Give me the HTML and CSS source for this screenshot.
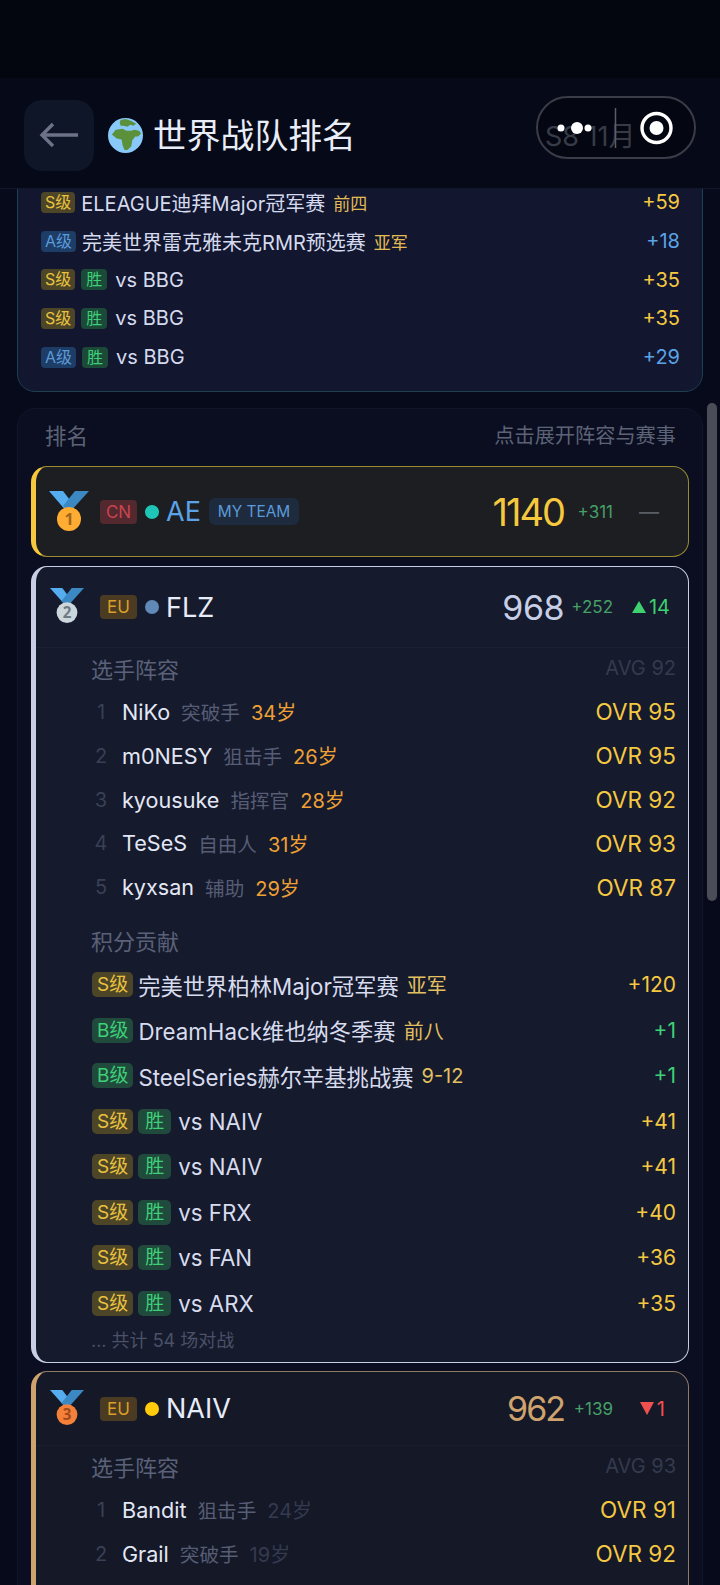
FILE: index.html
```html
<!DOCTYPE html>
<html lang="zh-CN">
<head>
    <meta charset="UTF-8">
    <meta name="viewport" content="width=device-width, initial-scale=1.0">
    <title>世界战队排名</title>
    <link rel="stylesheet" href="styles.css">
</head>
<body>

    <div class="status-band"></div>

    <header class="topbar">
        <button class="back-btn" aria-label="返回">
            <svg viewBox="0 0 40 26" width="40" height="26"><path d="M39 13H3M14 2 3 13l11 11" fill="none" stroke="#6d7289" stroke-width="3.4"/></svg>
        </button>
        <svg class="globe" viewBox="0 0 36 36" width="35" height="35">
            <circle cx="18" cy="18" r="18" fill="#88c9f9"/>
            <path d="M13 2l5-1 6 2 5 3-3 2-3-1-3 2-4-1-3 0-1-3Z" fill="#5c913b"/>
            <path d="M4 17l4-5 7-1 4 2 5 0 3-1 5 1 2 3-3 3-3 0-3 4-1 6-4 4-3 0-2-5-1-6-5-1-5-4Z" fill="#5c913b"/>
        </svg>
        <h1 class="page-title">世界战队排名</h1>
        <span class="season">S8 11月</span>
        <div class="capsule">
            <svg viewBox="0 0 160 62" width="160" height="62">
                <circle cx="25" cy="31" r="3.5" fill="#fff"/>
                <circle cx="41" cy="31" r="6" fill="#fff"/>
                <circle cx="52" cy="31" r="3.5" fill="#fff"/>
                <path d="M79.5 11v40" stroke="#5a5e6b" stroke-width="1.5"/>
                <circle cx="120.5" cy="31" r="14.5" fill="none" stroke="#fff" stroke-width="3.4"/>
                <circle cx="120.5" cy="31" r="7" fill="#fff"/>
            </svg>
        </div>
    </header>

    <section class="summary">
        <div class="match-row">
            <span class="tag tag-s">S级</span><span class="match-name">ELEAGUE迪拜Major冠军赛</span><span class="match-place">前四</span>
            <span class="match-pts pts-s">+59</span>
        </div>
        <div class="match-row">
            <span class="tag tag-a">A级</span><span class="match-name">完美世界雷克雅未克RMR预选赛</span><span class="match-place">亚军</span>
            <span class="match-pts pts-a">+18</span>
        </div>
        <div class="match-row">
            <span class="tag tag-s">S级</span><span class="tag tag-win">胜</span><span class="match-name">vs BBG</span>
            <span class="match-pts pts-s">+35</span>
        </div>
        <div class="match-row">
            <span class="tag tag-s">S级</span><span class="tag tag-win">胜</span><span class="match-name">vs BBG</span>
            <span class="match-pts pts-s">+35</span>
        </div>
        <div class="match-row">
            <span class="tag tag-a">A级</span><span class="tag tag-win">胜</span><span class="match-name">vs BBG</span>
            <span class="match-pts pts-a">+29</span>
        </div>
    </section>

    <section class="panel">
        <div class="panel-head">
            <span class="panel-title">排名</span>
            <span class="panel-hint">点击展开阵容与赛事</span>
        </div>

        <!-- 第一名 -->
        <article class="team team-gold">
            <div class="team-head">
                <svg class="medal medal-lg" viewBox="0 0 40 42">
                    <path d="M0 0h14l10 13-6 8Z" fill="#55acee"/>
                    <path d="M40 0H26L14 15l7 6Z" fill="#3b88c3"/>
                    <circle cx="20" cy="28" r="12" fill="#ffac33"/>
                    <text x="20" y="34" class="medal-num" fill="#a0661a">1</text>
                </svg>
                <span class="region region-cn">CN</span>
                <span class="dot dot-teal"></span>
                <span class="team-name name-blue">AE</span>
                <span class="my-team">MY TEAM</span>
                <span class="score score-gold">1140</span>
                <span class="gain">+311</span>
                <span class="trend trend-flat">—</span>
            </div>
        </article>

        <!-- 第二名 -->
        <article class="team team-silver">
            <div class="team-head">
                <svg class="medal" viewBox="0 0 36 37">
                    <path d="M0 0h13l9 12-5 7Z" fill="#55acee"/>
                    <path d="M36 0H23L12 14l7 5Z" fill="#3b88c3"/>
                    <circle cx="18" cy="26" r="11" fill="#ccd6dd"/>
                    <text x="18" y="32" class="medal-num" fill="#6d7b82">2</text>
                </svg>
                <span class="region region-eu">EU</span>
                <span class="dot dot-slate"></span>
                <span class="team-name">FLZ</span>
                <span class="score score-silver">968</span>
                <span class="gain">+252</span>
                <span class="trend trend-up"><i class="tri-up"></i>14</span>
            </div>
            <div class="team-body">
                <div class="section-head"><span>选手阵容</span><span class="avg">AVG 92</span></div>
                <div class="player"><span class="idx">1</span><span class="nick">NiKo</span><span class="role">突破手</span><span class="age age-hot">34岁</span><span class="ovr">OVR 95</span></div>
                <div class="player"><span class="idx">2</span><span class="nick">m0NESY</span><span class="role">狙击手</span><span class="age age-hot">26岁</span><span class="ovr">OVR 95</span></div>
                <div class="player"><span class="idx">3</span><span class="nick">kyousuke</span><span class="role">指挥官</span><span class="age age-hot">28岁</span><span class="ovr">OVR 92</span></div>
                <div class="player"><span class="idx">4</span><span class="nick">TeSeS</span><span class="role">自由人</span><span class="age age-hot">31岁</span><span class="ovr">OVR 93</span></div>
                <div class="player"><span class="idx">5</span><span class="nick">kyxsan</span><span class="role">辅助</span><span class="age age-hot">29岁</span><span class="ovr">OVR 87</span></div>

                <div class="section-head section-gap"><span>积分贡献</span></div>
                <div class="event"><span class="etag etag-s">S级</span><span class="ev-name">完美世界柏林Major冠军赛</span><span class="ev-place">亚军</span><span class="ev-pts pts-s">+120</span></div>
                <div class="event"><span class="etag etag-b">B级</span><span class="ev-name">DreamHack维也纳冬季赛</span><span class="ev-place">前八</span><span class="ev-pts pts-b">+1</span></div>
                <div class="event"><span class="etag etag-b">B级</span><span class="ev-name">SteelSeries赫尔辛基挑战赛</span><span class="ev-place">9-12</span><span class="ev-pts pts-b">+1</span></div>
                <div class="event"><span class="etag etag-s">S级</span><span class="etag etag-win">胜</span><span class="ev-name">vs NAIV</span><span class="ev-pts pts-s">+41</span></div>
                <div class="event"><span class="etag etag-s">S级</span><span class="etag etag-win">胜</span><span class="ev-name">vs NAIV</span><span class="ev-pts pts-s">+41</span></div>
                <div class="event"><span class="etag etag-s">S级</span><span class="etag etag-win">胜</span><span class="ev-name">vs FRX</span><span class="ev-pts pts-s">+40</span></div>
                <div class="event"><span class="etag etag-s">S级</span><span class="etag etag-win">胜</span><span class="ev-name">vs FAN</span><span class="ev-pts pts-s">+36</span></div>
                <div class="event"><span class="etag etag-s">S级</span><span class="etag etag-win">胜</span><span class="ev-name">vs ARX</span><span class="ev-pts pts-s">+35</span></div>
                <div class="more">... 共计 54 场对战</div>
            </div>
        </article>

        <!-- 第三名 -->
        <article class="team team-bronze">
            <div class="team-head">
                <svg class="medal" viewBox="0 0 36 37">
                    <path d="M0 0h13l9 12-5 7Z" fill="#55acee"/>
                    <path d="M36 0H23L12 14l7 5Z" fill="#3b88c3"/>
                    <circle cx="18" cy="26" r="11" fill="#f4803a"/>
                    <text x="18" y="32" class="medal-num" fill="#a04a1a">3</text>
                </svg>
                <span class="region region-eu">EU</span>
                <span class="dot dot-yellow"></span>
                <span class="team-name">NAIV</span>
                <span class="score score-bronze">962</span>
                <span class="gain">+139</span>
                <span class="trend trend-down"><i class="tri-down"></i>1</span>
            </div>
            <div class="team-body">
                <div class="section-head"><span>选手阵容</span><span class="avg">AVG 93</span></div>
                <div class="player"><span class="idx">1</span><span class="nick">Bandit</span><span class="role">狙击手</span><span class="age">24岁</span><span class="ovr">OVR 91</span></div>
                <div class="player"><span class="idx">2</span><span class="nick">Grail</span><span class="role">突破手</span><span class="age">19岁</span><span class="ovr">OVR 92</span></div>
            </div>
        </article>
    </section>

    <div class="scroll-thumb"></div>

</body>
</html>
```

FILE: styles.css
```css
* {
    box-sizing: border-box;
}
html, body {
    height: 1585px;
    overflow: hidden;
}
body {
    margin: 0;
    position: relative;
    background: #060a1a;
    color: #dfe4f3;
    font-family: Inter, "Noto Sans CJK SC", sans-serif;
}

/* 顶部 */
.status-band {
    height: 78px;
    background: #03060f;
}
.topbar {
    position: relative;
    z-index: 2;
    height: 111px;
    padding: 5px 0 0 24px;
    display: flex;
    align-items: center;
    background: #060917;
    border-bottom: 1px solid #111829;
}
.back-btn {
    width: 70px;
    height: 71px;
    margin-top: -1px;
    padding: 0;
    border: none;
    border-radius: 18px;
    background: #0e1628;
    display: flex;
    align-items: center;
    justify-content: center;
}
.globe {
    margin-left: 14px;
}
.page-title {
    margin: 0 0 0 10px;
    font-size: 33.8px;
    font-weight: 400;
    color: #e9edf8;
    line-height: 1;
}
.season {
    position: absolute;
    left: 545px;
    top: 41px;
    font-size: 27px;
    line-height: 36px;
    color: #4a4f60;
    white-space: nowrap;
}
.capsule {
    position: absolute;
    left: 536px;
    top: 18px;
    width: 160px;
    height: 63px;
    border: 2px solid #3a3d48;
    border-radius: 32px;
    background: rgba(0, 0, 0, 0.25);
}
.capsule svg {
    display: block;
    margin: -1px 0 0 -2px;
}

/* 上方赛事汇总 */
.summary {
    margin: -20px 17px 0;
    padding: 13px 22px 14.6px 23px;
    background: #12172f;
    border: 1px solid #1d3f52;
    border-radius: 18px;
}
.match-row {
    height: 38.7px;
    display: flex;
    align-items: center;
    font-size: 20px;
}
.tag {
    height: 21px;
    padding: 0 4px;
    margin-right: 6px;
    border-radius: 4px;
    font-size: 16px;
    line-height: 21px;
    white-space: nowrap;
}
.tag-s {
    background: #4d4528;
    color: #e8c23f;
}
.tag-a {
    background: #1d3c66;
    color: #5b9ad8;
}
.tag-win {
    margin-right: 8px;
    background: #1c4a38;
    color: #3ecf78;
    padding: 0 5px;
}
.match-name {
    color: #d5daee;
    white-space: nowrap;
}
.match-place {
    margin-left: 8px;
    font-size: 17px;
    color: #e2bb55;
}
.match-pts {
    margin-left: auto;
}
.pts-s {
    color: #f5c842;
}
.pts-a {
    color: #5ba3e6;
}
.pts-b {
    color: #3ecf78;
}

/* 排名面板 */
.panel {
    margin: 16px 17px 0;
    padding: 0 13px;
    height: 1300px;
    background: #0a0e20;
    border: 1px solid #10152a;
    border-radius: 18px;
}
.panel-head {
    height: 57px;
    padding: 0 13px 6px 14px;
    display: flex;
    align-items: center;
    justify-content: space-between;
}
.panel-title {
    font-size: 21.5px;
    color: #5d6377;
}
.panel-hint {
    font-size: 20.2px;
    color: #5d6377;
}

/* 战队卡片 */
.team {
    margin-bottom: 9px;
    border-style: solid;
    border-width: 1px 1px 1px 5px;
    border-radius: 16px;
}
.team-gold {
    height: 91px;
    background: #1c1e22;
    border-color: #9a8a30;
    border-left-color: #f6c83e;
}
.team-silver {
    margin-bottom: 8px;
    background: #151a2c;
    border-color: #c7cfe6;
}
.team-bronze {
    padding-bottom: 80px;
    background: #141827;
    border-color: #8f7a62;
    border-left-color: #cfa36d;
}
.team-head {
    display: flex;
    align-items: center;
    height: 81px;
    padding: 0 15px 0 14px;
    border-bottom: 1px solid rgba(255, 255, 255, 0.03);
}
.team-gold .team-head {
    height: 89px;
    border-bottom: none;
    padding-left: 13px;
}
.team-bronze .team-head {
    height: 74px;
}
.medal {
    width: 34px;
    height: 35px;
    margin-bottom: 3px;
}
.medal-lg {
    width: 40px;
    height: 42px;
    margin-bottom: 0;
}
.medal-num {
    font-family: "Noto Sans", sans-serif;
    font-size: 16px;
    font-weight: 700;
    text-anchor: middle;
}
.region {
    width: 37px;
    height: 24px;
    margin-left: 16px;
    border-radius: 4px;
    font-size: 17px;
    line-height: 24px;
    text-align: center;
}
.medal-lg + .region {
    margin-left: 11px;
}
.region-cn {
    background: #53282e;
    color: #c8444f;
}
.region-eu {
    background: #4a3b22;
    color: #dc9f27;
}
.dot {
    width: 14px;
    height: 14px;
    margin-left: 8px;
    border-radius: 50%;
}
.dot-teal {
    background: #1fc6b8;
}
.dot-slate {
    background: #6089b8;
}
.dot-yellow {
    background: #ffcb0a;
}
.team-name {
    margin-left: 7px;
    font-size: 27px;
    color: #e8ecf8;
}
.name-blue {
    color: #5ba3e6;
}
.my-team {
    margin-left: 8px;
    height: 27px;
    padding: 0 9px;
    border-radius: 6px;
    background: #1e2a3d;
    color: #5b9ad8;
    font-size: 15.4px;
    line-height: 27px;
    white-space: nowrap;
}
.score {
    margin-left: auto;
    font-size: 34px;
}
.score-gold {
    font-size: 38px;
    letter-spacing: -2px;
    color: #f6c83e;
}
.score-silver {
    letter-spacing: -0.5px;
    color: #c7cfe6;
}
.score-bronze {
    letter-spacing: -2px;
    color: #cfa36d;
}
.gain {
    width: 49px;
    font-size: 17px;
    color: #46a067;
    text-align: right;
    white-space: nowrap;
}
.trend {
    width: 60px;
    font-size: 20px;
    display: flex;
    align-items: center;
    justify-content: flex-end;
    white-space: nowrap;
}
.trend-flat {
    padding-right: 14px;
    color: #5a5f66;
}
.trend-up {
    padding-right: 3px;
    color: #3fd070;
}
.trend-down {
    padding-right: 8px;
    color: #f05050;
}
.tri-up {
    width: 0;
    height: 0;
    margin-right: 3px;
    border-left: 7.5px solid transparent;
    border-right: 7.5px solid transparent;
    border-bottom: 12px solid #3fd070;
}
.tri-down {
    width: 0;
    height: 0;
    margin-right: 3px;
    border-left: 7.5px solid transparent;
    border-right: 7.5px solid transparent;
    border-top: 13px solid #f05050;
}

/* 展开内容 */
.team-body {
    padding: 5px 12px 8px 55px;
}
.section-head {
    height: 30px;
    margin-bottom: 7px;
    display: flex;
    align-items: center;
    justify-content: space-between;
    font-size: 22px;
    color: #5a6178;
}
.section-gap {
    margin-top: 16px;
    margin-bottom: 7px;
}
.avg {
    font-size: 20px;
    color: #343a4e;
}
.player {
    height: 43.8px;
    display: flex;
    align-items: center;
}
.idx {
    width: 20px;
    margin-right: 11px;
    font-size: 20px;
    text-align: center;
    color: #3a4055;
}
.nick {
    font-size: 21.6px;
    color: #e3e7f5;
}
.role {
    margin-left: 11px;
    font-size: 19.6px;
    color: #565d75;
}
.age {
    margin-left: 11px;
    font-size: 20px;
    color: #343a50;
}
.age-hot {
    color: #eea035;
}
.ovr {
    margin-left: auto;
    font-size: 22.5px;
    color: #f5c842;
}
.event {
    height: 45.5px;
    padding-left: 1px;
    display: flex;
    align-items: center;
}
.etag {
    height: 25px;
    padding: 0 5px;
    margin-right: 5px;
    border-radius: 5px;
    font-size: 19px;
    line-height: 25px;
    white-space: nowrap;
}
.etag-s {
    background: #4d4528;
    color: #e8c23f;
}
.etag-b {
    background: #1f4a3c;
    color: #3ecf78;
}
.etag-win {
    margin-right: 7px;
    background: #1f4a3c;
    color: #3ecf78;
    padding: 0 7px;
}
.ev-name {
    font-size: 22.3px;
    color: #d8dcef;
    white-space: nowrap;
}
.ev-place {
    margin-left: 8px;
    font-size: 20px;
    color: #e2c060;
    white-space: nowrap;
}
.ev-pts {
    margin-left: auto;
    font-size: 21px;
}
.more {
    height: 28px;
    font-size: 18px;
    line-height: 29px;
    color: #4a5168;
}

.scroll-thumb {
    position: absolute;
    left: 707px;
    top: 403px;
    width: 10px;
    height: 498px;
    border-radius: 5px;
    background: #4a4d57;
}
```
